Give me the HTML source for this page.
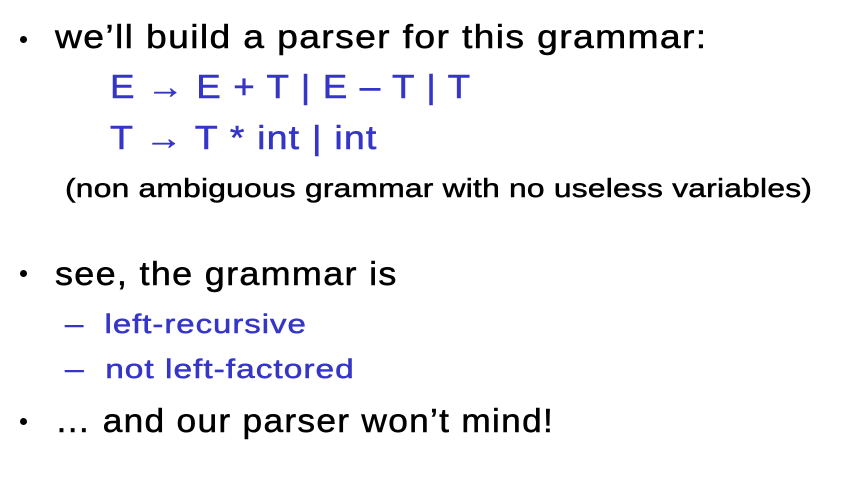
<!DOCTYPE html>
<html><head><meta charset="utf-8"><style>
html,body{margin:0;padding:0;background:#fff;width:860px;height:484px;overflow:hidden}
body{position:relative;font-family:"Liberation Sans",sans-serif;color:#000}
.l{position:absolute;white-space:nowrap;line-height:1;transform-origin:0 50%;-webkit-text-stroke:0.5px currentColor}
.b{color:#3535c8}
.dot{position:absolute;width:7px;height:7px;border-radius:50%;background:#000}
</style></head><body>
<div class="dot" style="left:20px;top:36px"></div>
<div class="l" style="left:55px;top:20px;font-size:33px;letter-spacing:1.2px;transform:scaleX(1.13)">we’ll build a parser for this grammar:</div>
<div class="l b" style="left:110px;top:70px;font-size:33px;letter-spacing:1px;transform:scaleX(1.115)">E → E + T | E – T | T</div>
<div class="l b" style="left:110px;top:121px;font-size:33px;letter-spacing:1px;transform:scaleX(1.14)">T → T * int | int</div>
<div class="l" style="left:65px;top:175px;font-size:26px;letter-spacing:0.2px;transform:scaleX(1.22)">(non ambiguous grammar with no useless variables)</div>
<div class="dot" style="left:20px;top:270px"></div>
<div class="l" style="left:55px;top:257px;font-size:33px;letter-spacing:1.2px;transform:scaleX(1.09)">see, the grammar is</div>
<div class="l b" style="left:65px;top:311px;font-size:27px;letter-spacing:0.8px;transform:scaleX(1.22)">–&nbsp;&nbsp;left-recursive</div>
<div class="l b" style="left:65px;top:356px;font-size:27px;letter-spacing:0.8px;transform:scaleX(1.24)">–&nbsp;&nbsp;not left-factored</div>
<div class="dot" style="left:20px;top:418px"></div>
<div class="l" style="left:55px;top:404px;font-size:33px;letter-spacing:1.2px;transform:scaleX(1.07)">… and our parser won’t mind!</div>
</body></html>
